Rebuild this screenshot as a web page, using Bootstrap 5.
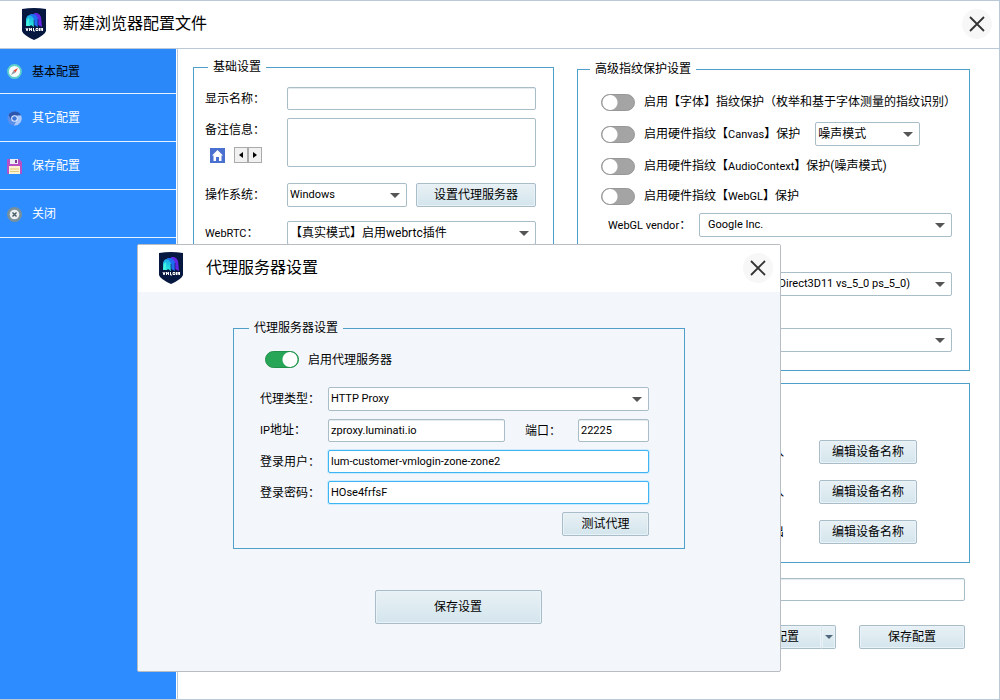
<!DOCTYPE html>
<html lang="zh-CN">
<head>
<meta charset="utf-8">
<meta name="viewport" content="width=device-width, initial-scale=1">
<title>新建浏览器配置文件</title>
<link href="https://cdn.jsdelivr.net/npm/bootstrap@5.3.0/dist/css/bootstrap.min.css" rel="stylesheet">
<style>
:root{--line:#4f9fc8;--edge:#a9bdc8;--frame:#b9c9d8;--blue:#2d8cff}
body{font:12px/16px Roboto,"Noto Sans CJK SC",sans-serif;color:#000;background:#fff}
.en{font-size:11px}
.window{min-height:100vh;border:1px solid var(--frame);border-left:0}
.titlebar{height:48px;border-bottom:1px solid var(--frame);padding:0 7px 2px 21px}
.titletext{font-size:16px;line-height:24px;font-weight:400;margin:0}
.closer{width:30px;height:30px;border-radius:50%;background:#f7f7f7}
.side{width:176px;background:var(--blue);flex:none}
.side a{display:flex;align-items:center;gap:10px;height:48px;padding:1px 0 0 7px;color:#fff;text-decoration:none;border-bottom:1px solid #e6f1ff}
.side a:first-child{height:45px}
.side a.active{color:#000;background:#2b88f8}
.main{border-left:1px solid var(--frame);margin-left:1px;padding:10px 29px 40px 15px;display:grid;grid-template-columns:minmax(0,361fr) minmax(0,393fr);column-gap:23px}
.group{border:1px solid var(--line);min-width:0}
.group legend{float:none;width:auto;font-size:12px;line-height:16px;margin:0 0 0 3px;padding:0 5px}
.left-group{padding:12px 17px 20px 11px}
.right-group{margin-top:2px;padding:9px 17px 18px 23px}
.right-group legend,.proxy legend{margin-left:-11px}
.form-control,.form-select{font-size:12px;line-height:16px;color:#000;border:1px solid var(--edge);border-radius:2px;padding:0 2px;min-height:0;background-color:#fff}
.form-control{height:23px;box-shadow:inset 0 1px 1px #e3eaee}
textarea.form-control{height:49px;resize:none;box-shadow:none}
.form-select{height:24px;padding-right:20px;background-image:url("data:image/svg+xml,%3Csvg xmlns='http://www.w3.org/2000/svg' viewBox='0 0 10 5'%3E%3Cpath d='M0 0h10L5 5z' fill='%23555'/%3E%3C/svg%3E");background-size:10px 5px;background-position:right 6px center}
.form-control.en,.form-select.en{font-size:11px}
.form-control.lit{border-color:#3fb4f5;box-shadow:0 0 0 1px #cdebfc}
.btn{font-size:12px;line-height:16px;color:#000;padding:0;border:1px solid #a9bdc8;border-radius:2px;background:linear-gradient(#e8f1f5,#d4e5ed);box-shadow:inset 0 0 0 1px #e9f2f6;height:24px}
.btn:hover{color:#000;background:#d4e5ed;border-color:#a9bdc8}
.lab{width:82px;flex:none}
.tgl.form-check-input{width:34px;height:17px;margin:0;border:1px solid #979797;border-radius:9px;flex:none;background:radial-gradient(circle at 8px 50%,#fff 7px,transparent 8px) #a4a4a4}
.tgl.form-check-input:checked{border-color:#219048;background:radial-gradient(circle at 24px 50%,#fff 7px,transparent 8px) #27a657}
.opt{display:flex;align-items:center;height:32px;gap:9px}
.opt.low{height:28px}
.tools{padding:9px 0 0 5px}
.tools svg.home{margin-right:9px}
.mini{width:14px;height:16px;border:1px solid #aaa;border-radius:0;background:#f1f1f1;box-shadow:none;display:flex;align-items:center;justify-content:center}
.canvas-mode{width:105px;margin-left:6px}
.os-row{display:grid;grid-template-columns:minmax(0,1fr) minmax(0,1fr);gap:9px;flex:1}
.rtc-row{margin-top:14px}
.vendor-row{margin-top:3px}
.vendor{padding-left:7px;width:98px;flex:none}
.renderer{margin-top:35px;text-align-last:right;padding-right:41px}
.version{margin-top:32px}
.dev{display:flex;align-items:center;justify-content:flex-end;gap:35px}
.dev .btn{width:98px}
.devices{margin-top:12px;padding:56px 52px 18px 23px}
.foot{padding:15px 5px 0 0}
.split{width:106px;margin-right:23px}
.split .main-act{text-align:right;padding-right:22px}
.split .drop{flex:none;width:15px;margin-left:0;border-left-color:#dbe7ed;display:flex;align-items:center;justify-content:center}
.save{width:106px}
.dialog-box{position:absolute;left:137px;top:243px;width:644px;background:#f3f7fc;border:1px solid #b9bcc0;border-radius:2px;z-index:5}
.dialog-head{height:47px;background:#fff;padding:0 7px 2px 20px}
.dialog-head .titletext{margin-left:22px}
.proxy{margin:28px 95px 0;padding:15px 35px 12px 26px}
.enable-row{padding:0 0 19px 5px;gap:9px}
.plab{width:68px;flex:none}
.port{width:73px;padding-left:20px;flex:none}
.port-in{width:71px;flex:none}
.test{width:87px}
.save-row{padding:41px 2px 47px 0}
.save-big{width:167px;height:34px}
</style>
</head>
<body>
<svg width="0" height="0" class="position-absolute" aria-hidden="true"><defs>
  <linearGradient id="cy" x2="0" y2="1"><stop offset="0" stop-color="#1aa8ea"/><stop offset="1" stop-color="#2af0dc"/></linearGradient>
  <symbol id="logo" viewBox="0 0 26 32">
    <path d="M1 1Q13-1 25 1V23Q24 27 13 32 2 27 1 23Z" fill="#06183f"/>
    <path d="M13 5h3q3 1 4 4l1 10-4-2-3-8z" fill="#6426e6"/>
    <path d="M9 6h4q3 1 4 5v8l-4-2-3-8z" fill="#1f6df0"/>
    <path d="M5 11q1-4 4-4 3 1 4 5v7l-3-2-1 1H5z" fill="url(#cy)"/>
    <path d="M6 12l2-2v8H5z" fill="#45f3df"/>
    <path d="M13 12v6M17 11v7" stroke="#06183f" stroke-width=".6"/>
    <path d="M5 20l1 3 1-3M8.500 23v-3l1 2 1-2v3M12.500 20v3h1.500M15 20.500h2v2h-2zM18.500 20v3M20 23v-3l1.500 3v-3" fill="none" stroke="#fff"/>
  </symbol></defs></svg>
<div class="window d-flex flex-column position-relative">
  <header class="titlebar d-flex align-items-center">
    <svg width="26" height="32" aria-hidden="true"><use href="#logo"/></svg>
    <h1 class="titletext ms-3 flex-grow-1">新建浏览器配置文件</h1>
    <button class="closer border-0 p-0" type="button" aria-label="关闭窗口"><svg width="16" height="16" viewBox="0 0 16 16"><path d="M1 1l14 14M15 1L1 15" stroke="#333" stroke-width="1.8"/></svg></button>
  </header>
  <div class="d-flex flex-grow-1">
    <nav class="side">
      <a href="#" class="active"><svg width="15" height="15" viewBox="0 0 15 15"><circle cx="7.500" cy="7.500" r="6.500" fill="#f4fbfa" stroke="#5fcfca" stroke-width="1.800"/><path d="M11 4L8.500 8.500 6.500 6.500z" fill="#e5473d"/><path d="M4 11l4.500-2.500-2-2z" fill="#8b98a0"/></svg>基本配置</a>
      <a href="#"><svg width="15" height="15" viewBox="0 0 15 15"><circle cx="7.500" cy="7.500" r="7" fill="#5b8ee8"/><path d="M1.500 4A7 7 0 0 1 14 4.500H7.500L4.500 9z" fill="#2c56ad"/><path d="M14 4.500A7 7 0 0 1 7 14.500L10.500 8V4.500z" fill="#a9c8fb"/><circle cx="7.500" cy="7.500" r="3.300" fill="#e6f0ff"/><circle cx="7.500" cy="7.500" r="2.300" fill="#3f74d8"/></svg>其它配置</a>
      <a href="#"><svg width="15" height="15" viewBox="0 0 15 15"><path d="M0 1q0-1 1-1h11l3 3v11q0 1-1 1H1q-1 0-1-1z" fill="#b84fc4"/><path d="M3 0h8v5H3z" fill="#eceff1"/><path d="M8 1h2v3H8z" fill="#7f3f90"/><path d="M2 7h11v8H2z" fill="#fff3d0"/><path d="M3 10h9M3 12.500h9" stroke="#e6c77e"/></svg>保存配置</a>
      <a href="#"><svg width="15" height="15" viewBox="0 0 15 15"><circle cx="7.500" cy="7.500" r="7.500" fill="#78909c"/><circle cx="7.500" cy="7.500" r="4.800" fill="#eceff1"/><path d="M5.500 5.500l4 4M9.500 5.500l-4 4" stroke="#455a64" stroke-width="1.400"/></svg>关闭</a>
    </nav>
    <main class="main flex-grow-1">
      <fieldset class="group left-group">
        <legend>基础设置</legend>
        <div class="d-flex align-items-center mb-2"><label class="lab" for="name">显示名称：</label><input id="name" class="form-control"></div>
        <div class="d-flex mb-3">
          <div class="lab pt-1"><label for="note">备注信息：</label>
            <div class="d-flex align-items-center tools"><svg width="15" height="15" viewBox="0 0 15 15" class="home" aria-hidden="true"><path d="M0 0h15v15H0z" fill="#4a70d0"/><path d="M7.500 2L13 7.500h-1.500V13H9V9H6v4H3.500V7.500H2z" fill="#fff"/></svg>
              <button type="button" class="btn mini" aria-label="向左"><svg width="4" height="6"><path d="M4 0v6L0 3z"/></svg></button><button type="button" class="btn mini" aria-label="向右"><svg width="4" height="6"><path d="M0 0v6L4 3z"/></svg></button></div>
          </div>
          <textarea id="note" class="form-control"></textarea>
        </div>
        <div class="d-flex align-items-center"><label class="lab" for="os">操作系统：</label>
          <div class="os-row"><select id="os" class="form-select en"><option>Windows</option></select>
          <button type="button" class="btn">设置代理服务器</button></div></div>
        <div class="d-flex align-items-center rtc-row"><label class="lab" for="rtc"><span class="en">WebRTC</span>：</label>
          <select id="rtc" class="form-select"><option>【真实模式】启用webrtc插件</option></select></div>
      </fieldset>
      <div>
        <fieldset class="group right-group">
          <legend>高级指纹保护设置</legend>
          <div class="opt"><input class="form-check-input tgl" type="checkbox" role="switch" id="s1"><label for="s1" class="text-nowrap">启用【字体】指纹保护（枚举和基于字体测量的指纹识别）</label></div>
          <div class="opt"><input class="form-check-input tgl" type="checkbox" role="switch" id="s2"><label for="s2" class="text-nowrap">启用硬件指纹【<span class="en">Canvas</span>】保护</label>
            <select class="form-select canvas-mode" aria-label="Canvas"><option>噪声模式</option></select></div>
          <div class="opt"><input class="form-check-input tgl" type="checkbox" role="switch" id="s3"><label for="s3">启用硬件指纹【<span class="en">AudioContext</span>】保护(噪声模式)</label></div>
          <div class="opt low"><input class="form-check-input tgl" type="checkbox" role="switch" id="s4"><label for="s4">启用硬件指纹【<span class="en">WebGL</span>】保护</label></div>
          <div class="d-flex align-items-center vendor-row"><label class="vendor" for="vendor"><span class="en">WebGL vendor</span>：</label>
            <select id="vendor" class="form-select en ps-2"><option>Google Inc.</option></select></div>
          <select class="form-select en renderer" aria-label="WebGL renderer"><option>Direct3D11 vs_5_0 ps_5_0)</option></select>
          <select class="form-select en version" aria-label="WebGL"><option></option></select>
        </fieldset>
        <fieldset class="group devices d-flex flex-column gap-3" aria-label="设备">
          <div class="dev"><span>音频输入</span><button type="button" class="btn">编辑设备名称</button></div>
          <div class="dev"><span>视频输入</span><button type="button" class="btn">编辑设备名称</button></div>
          <div class="dev"><span>音频输出</span><button type="button" class="btn">编辑设备名称</button></div>
        </fieldset>
        <div class="foot">
          <input class="form-control" aria-label="配置">
          <div class="d-flex justify-content-end mt-4">
            <div class="btn-group split"><button type="button" class="btn main-act">配置</button><button type="button" class="btn drop" aria-label="更多"><svg width="8" height="4"><path d="M0 0h8L4 4z" fill="#50697c"/></svg></button></div>
            <button type="button" class="btn save">保存配置</button>
          </div>
        </div>
      </div>
    </main>
  </div>
  <section class="dialog-box" role="dialog" aria-labelledby="dt">
    <header class="dialog-head d-flex align-items-center">
      <svg width="26" height="32" aria-hidden="true"><use href="#logo"/></svg>
      <h2 class="titletext flex-grow-1" id="dt">代理服务器设置</h2>
      <button class="closer border-0 p-0" type="button" aria-label="关闭"><svg width="16" height="16" viewBox="0 0 16 16"><path d="M1 1l14 14M15 1L1 15" stroke="#333" stroke-width="1.8"/></svg></button>
    </header>
    <form>
      <fieldset class="group proxy">
        <legend>代理服务器设置</legend>
        <div class="d-flex align-items-center enable-row"><input class="form-check-input tgl" type="checkbox" role="switch" id="px" checked><label for="px">启用代理服务器</label></div>
        <div class="d-flex flex-column gap-2">
          <div class="d-flex align-items-center"><label class="plab" for="pt">代理类型：</label><select id="pt" class="form-select en"><option>HTTP Proxy</option></select></div>
          <div class="d-flex align-items-center"><label class="plab" for="ip"><span class="en">IP</span>地址：</label><input id="ip" class="form-control en" value="zproxy.luminati.io"><label class="port" for="po">端口：</label><input id="po" class="form-control en port-in" value="22225"></div>
          <div class="d-flex align-items-center"><label class="plab" for="us">登录用户：</label><input id="us" class="form-control en lit" value="lum-customer-vmlogin-zone-zone2"></div>
          <div class="d-flex align-items-center"><label class="plab" for="pw">登录密码：</label><input id="pw" class="form-control en lit" value="HOse4frfsF"></div>
          <button type="button" class="btn test align-self-end">测试代理</button>
        </div>
      </fieldset>
      <div class="text-center save-row"><button type="button" class="btn save-big">保存设置</button></div>
    </form>
  </section>
</div>
<script src="https://cdn.jsdelivr.net/npm/bootstrap@5.3.0/dist/js/bootstrap.bundle.min.js"></script>
</body>
</html>
